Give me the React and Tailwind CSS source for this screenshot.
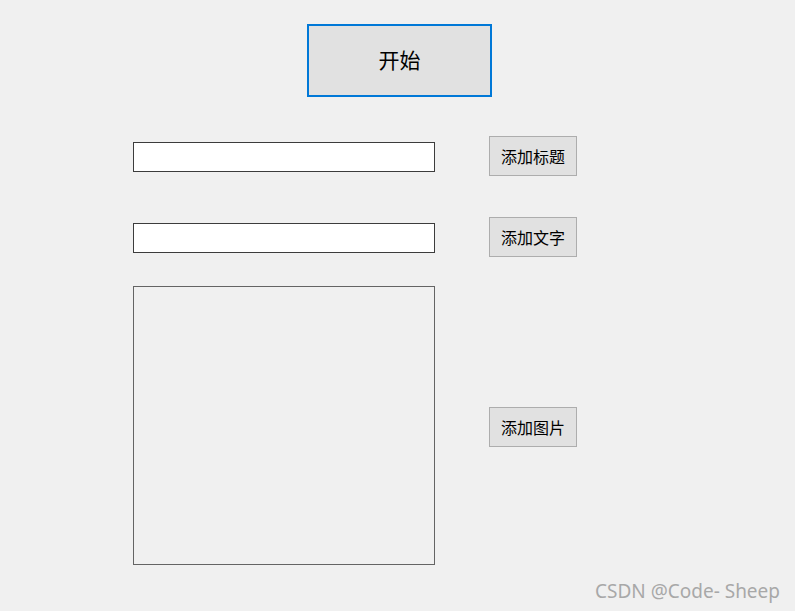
import React from 'react';

const cjk = { fontFamily: '"Microsoft YaHei UI", "Noto Sans CJK SC", "Noto Sans", sans-serif' };

const SideButton = ({ children }) => (
  <button
    style={cjk}
    className="w-[88px] h-[40px] shrink-0 bg-[#e1e1e1] border border-[#adadad] text-[16px] leading-none text-black pb-[1px]"
  >
    {children}
  </button>
);

export default function App() {
  return (
    <div className="relative w-[795px] h-[611px] bg-[#f0f0f0] overflow-hidden">
      {/* Start button */}
      <div className="pt-[24px] pl-[307px]">
        <button
          style={cjk}
          className="w-[185px] h-[73px] bg-[#e1e1e1] border-2 border-[#0078d7] text-[21px] leading-none text-black pb-[3px]"
        >
          开始
        </button>
      </div>

      <div className="pl-[133px] flex flex-col">
        {/* Title row */}
        <div className="mt-[39px] flex items-start gap-[54px]">
          <input className="mt-[6px] w-[302px] h-[30px] bg-white border border-[#3c3c3c] outline-none" />
          <SideButton>添加标题</SideButton>
        </div>

        {/* Text row */}
        <div className="mt-[41px] flex items-start gap-[54px]">
          <input className="mt-[6px] w-[302px] h-[30px] bg-white border border-[#3c3c3c] outline-none" />
          <SideButton>添加文字</SideButton>
        </div>

        {/* Picture row */}
        <div className="mt-[29px] flex items-start gap-[54px]">
          <div className="w-[302px] h-[279px] border border-[#646464]" />
          <div className="mt-[121px]">
            <SideButton>添加图片</SideButton>
          </div>
        </div>
      </div>

      {/* watermark */}
      <div
        className="absolute right-[15px] bottom-[10px] text-[19px] text-[#a8a8a8] leading-none"
        style={{ fontFamily: '"Noto Sans", sans-serif' }}
      >
        CSDN @Code- Sheep
      </div>
    </div>
  );
}
